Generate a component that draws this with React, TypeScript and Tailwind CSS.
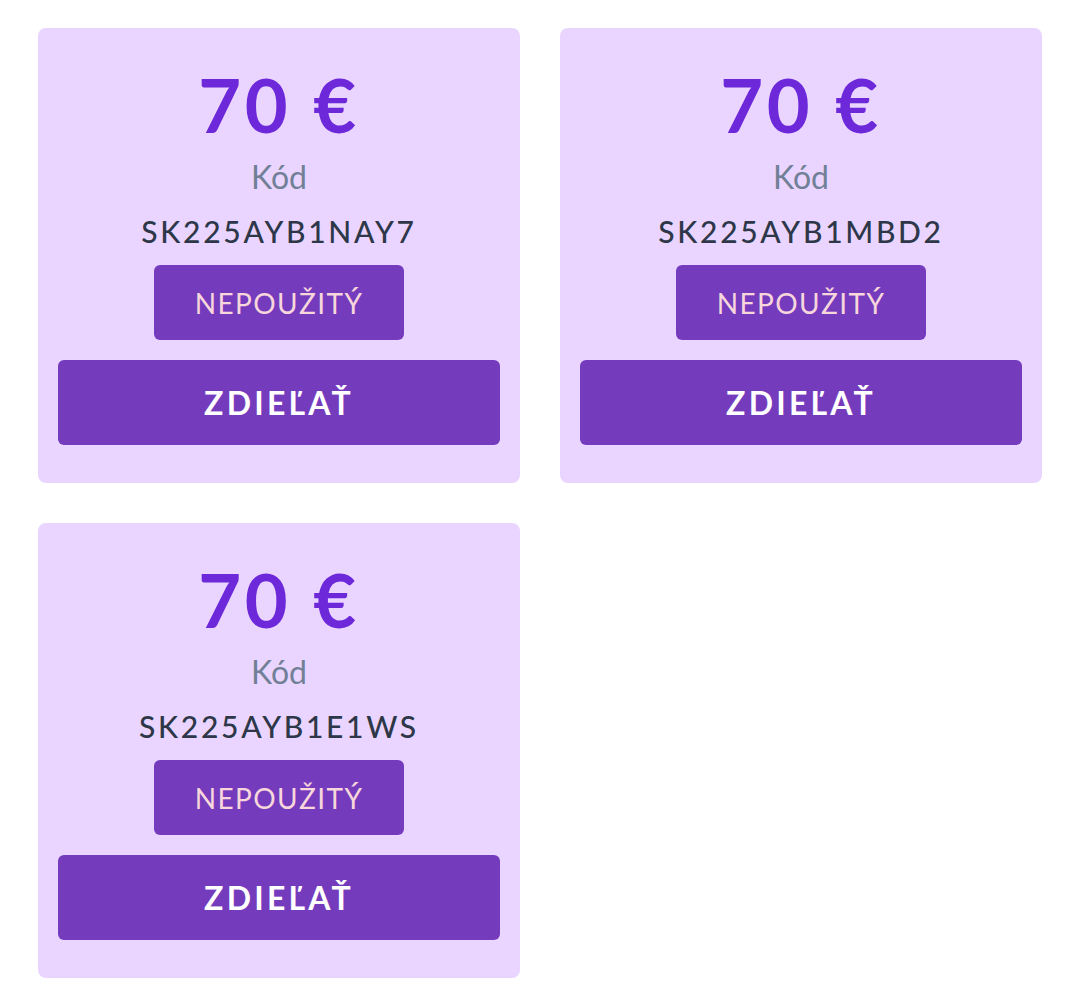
import React from 'react';

const vouchers = [
  { amount: '70 €', code: 'SK225AYB1NAY7' },
  { amount: '70 €', code: 'SK225AYB1MBD2' },
  { amount: '70 €', code: 'SK225AYB1E1WS' },
];

function VoucherCard({ amount, code }: { amount: string; code: string }) {
  return (
    <div className="flex flex-col items-center rounded-lg bg-[#e9d5ff] px-5 pt-[37px] pb-[38px]">
      <div className="text-[74px] leading-[80px] font-bold tracking-[0.05em] text-[#6d28d9]">{amount}</div>
      <div className="mt-[12px] text-[32px] leading-[40px] text-[#718096]">Kód</div>
      <div className="mt-[14px] text-[30px] leading-[40px] font-medium tracking-[0.09em] text-[#2d3748]">{code}</div>
      <div className="mt-[14px] flex h-[75px] w-[250px] items-center justify-center rounded-md bg-[#753bbd] text-[28px] font-normal tracking-[0.05em] text-[#f7d6dc]">
        NEPOUŽITÝ
      </div>
      <button className="mt-5 flex h-[85px] w-full items-center justify-center rounded-md bg-[#753bbd] text-[32px] font-bold tracking-[0.1em] text-white">
        ZDIEĽAŤ
      </button>
    </div>
  );
}

export default function App() {
  return (
    <div className="min-h-screen bg-white px-[38px] pt-[28px] pb-10 font-['Lato',sans-serif]">
      <div className="grid grid-cols-2 gap-10">
        {vouchers.map((v) => (
          <VoucherCard key={v.code} amount={v.amount} code={v.code} />
        ))}
      </div>
    </div>
  );
}
